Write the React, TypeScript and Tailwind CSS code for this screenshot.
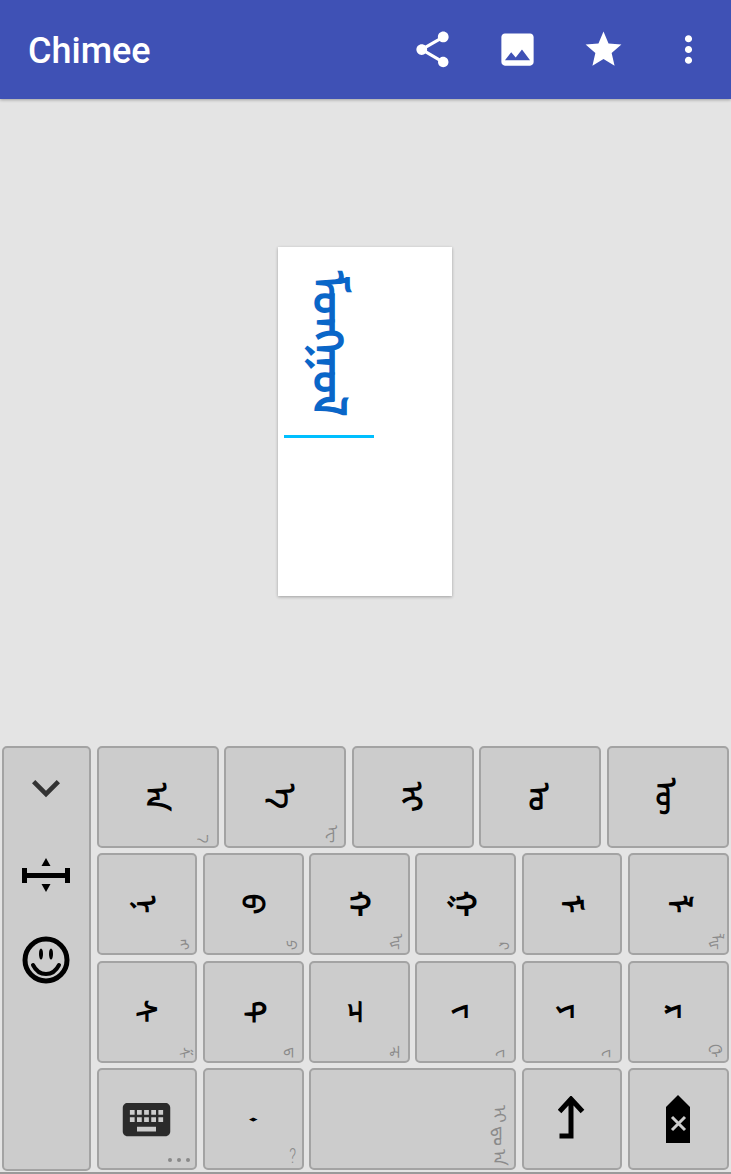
import type { ReactNode } from 'react';

const Key = ({ label, hint, className = '', children }: { label?: string; hint?: string; className?: string; children?: ReactNode }) => (
  <div className={`relative flex items-center justify-center rounded-[5px] border-2 border-[#a3a3a3] bg-[#cccccc] text-black ${className}`}>
    {label && <span className="pr-[3px] text-[30px] font-bold leading-none [writing-mode:vertical-lr]">{label}</span>}
    {children}
    {hint && (
      <span className="absolute bottom-[3px] right-[4px] text-[15px] leading-none text-[#8a8a8a] [writing-mode:vertical-lr]">{hint}</span>
    )}
  </div>
);

const ShareIcon = () => (
  <svg viewBox="0 0 24 24" className="h-[43px] w-[43px] fill-white">
    <path d="M18 16.08c-.76 0-1.44.3-1.96.77L8.91 12.7c.05-.23.09-.46.09-.7s-.04-.47-.09-.7l7.05-4.11c.54.5 1.25.81 2.04.81 1.66 0 3-1.34 3-3s-1.34-3-3-3-3 1.34-3 3c0 .24.04.47.09.7L8.04 9.81C7.5 9.31 6.79 9 6 9c-1.66 0-3 1.34-3 3s1.34 3 3 3c.79 0 1.5-.31 2.04-.81l7.12 4.16c-.05.21-.08.43-.08.65 0 1.61 1.31 2.92 2.92 2.92 1.61 0 2.92-1.31 2.92-2.92s-1.31-2.92-2.92-2.92z" />
  </svg>
);

const ImageIcon = () => (
  <svg viewBox="0 0 24 24" className="h-[43px] w-[43px] fill-white">
    <path d="M21 19V5c0-1.1-.9-2-2-2H5c-1.1 0-2 .9-2 2v14c0 1.1.9 2 2 2h14c1.1 0 2-.9 2-2zM8.5 13.5l2.5 3.01L14.5 12l4.5 6H5l3.5-4.5z" />
  </svg>
);

const StarIcon = () => (
  <svg viewBox="0 0 24 24" className="h-[43px] w-[43px] fill-white">
    <path d="M12 17.27L18.18 21l-1.64-7.03L22 9.24l-7.19-.61L12 2 9.19 8.63 2 9.24l5.46 4.73L5.82 21z" />
  </svg>
);

const MoreIcon = () => (
  <svg viewBox="0 0 24 24" className="h-[43px] w-[43px] fill-white">
    <path d="M12 8c1.1 0 2-.9 2-2s-.9-2-2-2-2 .9-2 2 .9 2 2 2zm0 2c-1.1 0-2 .9-2 2s.9 2 2 2 2-.9 2-2-.9-2-2-2zm0 6c-1.1 0-2 .9-2 2s.9 2 2 2 2-.9 2-2-.9-2-2-2z" />
  </svg>
);

export default function App() {
  return (
    <div className="flex h-[1174px] w-[731px] flex-col overflow-hidden bg-[#e4e4e4] font-['Roboto',sans-serif]">
      <header className="z-10 flex h-[99px] shrink-0 items-center bg-[#3f51b5] pl-[28px] pr-[21px] shadow-[0_1px_3px_rgba(0,0,0,0.3)]">
        <h1 className="flex-1 pt-[3px] text-[36px] font-medium leading-none text-white">Chimee</h1>
        <div className="flex items-center gap-[42.5px]">
          <ShareIcon />
          <ImageIcon />
          <StarIcon />
          <MoreIcon />
        </div>
      </header>

      <main className="flex flex-1 items-center justify-center">
        <div className="mb-[2px] mr-[2px] h-[349px] w-[174px] bg-white px-[6px] pt-[6px] shadow-[0_1px_3px_rgba(0,0,0,0.3)]">
          <div className="flex h-[185px] w-[90px] justify-center border-b-[3px] border-[#00bfff] pt-[18px]">
            <span className="text-[46px] font-bold leading-none text-[#0a66c8] [writing-mode:vertical-lr]">ᠮᠣᠩᠭᠣᠯ</span>
          </div>
        </div>
      </main>

      <section className="flex h-[425px] shrink-0 gap-[6px] pl-[1.5px] pr-[2.5px]">
        <div className="flex w-[89px] flex-col items-center rounded-[5px] border-2 border-[#a3a3a3] bg-[#cccccc]">
          <svg viewBox="0 0 24 24" className="mt-[12px] h-[56px] w-[56px] fill-[#333333]">
            <path d="M16.59 8.59L12 13.17 7.41 8.59 6 10l6 6 6-6z" />
          </svg>
          <svg viewBox="0 0 48 36" className="mt-[41px] h-[36px] w-[48px] fill-black">
            <path d="M0 11h5v15H0zM43 11h5v15h-5zM5 16h38v5H5zM24 1l4.500 8h-9zM24 35l-4.500-8h9z" />
          </svg>
          <svg viewBox="0 0 48 48" className="mt-[43px] h-[48px] w-[48px] fill-none stroke-black">
            <circle cx="24" cy="24" r="21" strokeWidth="5" />
            <ellipse cx="19" cy="18" rx="2" ry="5.500" className="fill-black stroke-none" />
            <ellipse cx="29" cy="18" rx="2" ry="5.500" className="fill-black stroke-none" />
            <path d="M11 29c3 6 8 9 13 9s10-3 13-9" strokeWidth="4" strokeLinecap="round" />
          </svg>
        </div>

        <div className="mb-[1px] flex flex-1 flex-col gap-[5.5px]">
          <div className="flex flex-1 gap-[5.5px]">
            <Key className="flex-1" label="ᠠ" hint="᠊ᠠ᠋" />
            <Key className="flex-1" label="ᠡ" hint="ᠧ" />
            <Key className="flex-1" label="ᠢ" />
            <Key className="flex-1" label="ᠣ" />
            <Key className="flex-1" label="ᠥ" />
          </div>
          <div className="grid flex-1 grid-cols-6 gap-[5.5px]">
            <Key label="ᠨ" hint="ᠩ" />
            <Key label="ᠪ" hint="ᠫ" />
            <Key label="ᠬ" hint="ᠾ" />
            <Key label="ᠭ" hint="ᠺ" />
            <Key label="ᠮ" />
            <Key label="ᠯ" hint="ᡀ" />
          </div>
          <div className="grid flex-1 grid-cols-6 gap-[5.5px]">
            <Key label="ᠰ" hint="ᠱ" />
            <Key label="ᠲ" hint="ᠳ" />
            <Key label="ᠴ" hint="ᠼ" />
            <Key label="ᠵ" hint="ᠸ" />
            <Key label="ᠶ" hint="ᠸ" />
            <Key label="ᠷ" hint="ᠿ" />
          </div>
          <div className="grid flex-1 grid-cols-6 gap-[5.5px]">
            <Key>
              <svg viewBox="0 0 24 24" className="h-[57px] w-[57px] fill-[#2b2b2b]">
                <path d="M20 5H4c-1.100 0-1.990.9-1.990 2L2 17c0 1.100.9 2 2 2h16c1.100 0 2-.9 2-2V7c0-1.100-.9-2-2-2zm-9 3h2v2h-2V8zm0 3h2v2h-2v-2zM8 8h2v2H8V8zm0 3h2v2H8v-2zm-1 2H5v-2h2v2zm0-3H5V8h2v2zm9 7H8v-2h8v2zm0-4h-2v-2h2v2zm0-3h-2V8h2v2zm3 3h-2v-2h2v2zm0-3h-2V8h2v2z" />
              </svg>
              <span className="absolute bottom-[6px] right-[5px] flex gap-[5px]">
                <i className="h-[4px] w-[4px] rounded-full bg-[#8a8a8a]" />
                <i className="h-[4px] w-[4px] rounded-full bg-[#8a8a8a]" />
                <i className="h-[4px] w-[4px] rounded-full bg-[#8a8a8a]" />
              </span>
            </Key>
            <Key>
              <span className="scale-y-50 font-['DejaVu_Sans',sans-serif] text-[11px] leading-none">◆</span>
              <span className="absolute bottom-[2px] right-[4px] scale-x-75 text-[20px] font-light leading-none text-[#8a8a8a]">?</span>
            </Key>
            <Key className="col-span-2">
              <span className="absolute bottom-[2px] right-[6px] flex flex-col items-center gap-[3px] text-[18px] leading-none text-[#8a8a8a]">
                <span className="[writing-mode:vertical-lr]">ᠢ</span>
                <span className="[writing-mode:vertical-lr]">ᠳᠤ</span>
                <span className="[writing-mode:vertical-lr]">ᠠ</span>
              </span>
            </Key>
            <Key>
              <svg viewBox="0 0 28 46" className="h-[46px] w-[28px] fill-none stroke-black stroke-[5px]">
                <path d="M1.500 15.500L13 3l11.500 12.500M13 3v39.500M1.500 40H15" />
              </svg>
            </Key>
            <Key>
              <svg viewBox="0 0 24 48" className="h-[48px] w-[24px] fill-black">
                <path d="M12 0l12 12v36H0V12z" />
                <path d="M6 22l13 13M19 22L6 35" className="fill-none stroke-[#cccccc] stroke-[3px]" />
              </svg>
            </Key>
          </div>
        </div>
      </section>
      <div className="mt-[1px] h-[2px] shrink-0 bg-[#9a9a9a]" />
    </div>
  );
}
